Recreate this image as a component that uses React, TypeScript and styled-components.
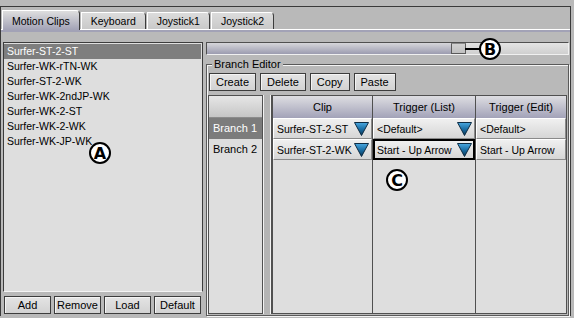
import styled, { createGlobalStyle } from "styled-components"

const GlobalStyle = createGlobalStyle`
  html, body { margin: 0; padding: 0; background: #b9b9b9; }
  body {
    font-family: "Liberation Sans", Arial, sans-serif;
    font-size: 10.5px;
    color: #000;
  }
  * { box-sizing: border-box; }
`

const Screen = styled.div`
  position: relative;
  width: 574px;
  height: 318px;
  overflow: hidden;
  background: #b9b9b9;
  padding-top: 6px;
`

const Window = styled.div`
  height: 310px;
  margin-right: 3px;
  border: 1px solid #3a3a3a;
  border-bottom: none;
  display: flex;
  flex-direction: column;
`

const TabBar = styled.div`
  height: 22px;
  display: flex;
  align-items: flex-end;
  padding-left: 1px;
`

const Tab = styled.div<{ $active?: boolean }>`
  height: ${(p) => (p.$active ? "20px" : "17px")};
  margin-bottom: ${(p) => (p.$active ? "-1px" : "0")};
  padding: 0 9px;
  margin-right: 1px;
  display: flex;
  align-items: center;
  justify-content: center;
  border-top: 1px solid #fff;
  border-left: 1px solid #fff;
  border-right: 1px solid #3c3c3c;
  border-top-right-radius: 4px;
  background: ${(p) =>
    p.$active
      ? "linear-gradient(#dedede, #a2a2b6)"
      : "linear-gradient(#dcdcdc, #c9c9c9)"};
  position: relative;
  z-index: ${(p) => (p.$active ? 1 : 0)};
`

const TabLine = styled.div`
  height: 3px;
  border-top: 1px solid #fff;
  background: #a2a2b6;
`

const Panel = styled.div`
  flex: 1;
  display: flex;
  gap: 3px;
  padding: 10px 1px 0 2px;
  min-height: 0;
`

const LeftCol = styled.div`
  width: 200px;
  display: flex;
  flex-direction: column;
  gap: 4px;
  padding-bottom: 2px;
`

const ListBox = styled.div`
  flex: 1;
  background: #dedede;
  border-top: 1px solid #3c3c3c;
  border-left: 1px solid #3c3c3c;
  border-right: 1px solid #3c3c3c;
  border-bottom: 1px solid #f4f4f4;
  padding-top: 1px;
`

const ListItem = styled.div<{ $selected?: boolean }>`
  height: 15px;
  line-height: 15px;
  padding-left: 3px;
  margin-right: 1px;
  background: ${(p) => (p.$selected ? "#7e7e7e" : "transparent")};
  color: ${(p) => (p.$selected ? "#fff" : "#000")};
  white-space: nowrap;
`

const ButtonRow = styled.div<{ $gap: number }>`
  display: flex;
  gap: ${(p) => p.$gap}px;
  padding-left: 1px;
`

const Button = styled.div<{ $w?: number }>`
  height: 18px;
  ${(p) => (p.$w ? `width: ${p.$w}px;` : "padding: 0 6px;")}
  display: flex;
  align-items: center;
  justify-content: center;
  border: 1px solid #3c3c3c;
  background: linear-gradient(#e4e4e4, #d2d2d2);
  box-shadow: inset 1px 1px 0 #f4f4f4;
  font-size: 11px;
`

const RightCol = styled.div`
  flex: 1;
  display: flex;
  flex-direction: column;
  gap: 9px;
  min-width: 0;
`

const SliderTrack = styled.div`
  height: 13px;
  display: flex;
  align-items: stretch;
  border-top: 1px solid #505050;
  border-left: 1px solid #505050;
  border-bottom: 1px solid #f0f0f0;
  border-right: 1px solid #f0f0f0;
`

const SliderFill = styled.div<{ $w: number }>`
  width: ${(p) => p.$w}px;
  background: linear-gradient(#d6d6da, #9c9cb0);
`

const SliderThumb = styled.div`
  width: 15px;
  background: linear-gradient(#d2d2d2, #c0c0c0);
  border: 1px solid #5a5a5a;
  border-top-color: #8a8a8a;
`

const SliderRest = styled.div`
  flex: 1;
  background: linear-gradient(#e4e4e4, #cfcfcf);
`

const GroupBox = styled.div`
  position: relative;
  flex: 1;
  border: 1px solid #5a5a5a;
  box-shadow: inset 1px 1px 0 #f4f4f4, 1px 1px 0 #f4f4f4;
  padding: 8px 1px 1px 1px;
  display: flex;
  flex-direction: column;
  gap: 4px;
`

const Legend = styled.div`
  position: absolute;
  top: -8px;
  left: 5px;
  padding: 0 2px;
  background: #b9b9b9;
  line-height: 14px;
  font-size: 11px;
`

const TableArea = styled.div`
  flex: 1;
  display: flex;
  min-height: 0;
`

const BranchCol = styled.div`
  width: 55px;
  border: 1px solid #505050;
  background: #dedede;
  display: flex;
  flex-direction: column;
`

const BranchHeader = styled.div`
  height: 22px;
  background: linear-gradient(#e6e6e6, #c6c6c6);
  border-bottom: 1px solid #8c8c8c;
`

const BranchRow = styled.div<{ $selected?: boolean }>`
  height: 21px;
  line-height: 21px;
  padding-left: 4px;
  font-size: 11px;
  background: ${(p) => (p.$selected ? "#7c7c7c" : "transparent")};
  color: ${(p) => (p.$selected ? "#fff" : "#000")};
`

const Splitter = styled.div`
  width: 9px;
  border-left: 1px solid #f2f2f2;
  border-right: 1px solid #505050;
  background: #b4b4b4;
  box-shadow: inset -1px 0 0 #f2f2f2;
`

const Grid = styled.div`
  flex: 1;
  display: flex;
  border: 1px solid #505050;
  background: #dedede;
`

const Column = styled.div<{ $w?: number }>`
  ${(p) => (p.$w ? `width: ${p.$w}px;` : "flex: 1;")}
  display: flex;
  flex-direction: column;
  border-right: 1px solid #505050;
  &:last-child { border-right: none; }
`

const HeaderCell = styled.div`
  height: 22px;
  display: flex;
  align-items: center;
  justify-content: center;
  background: linear-gradient(#dedee2, #a2a2b8);
  font-size: 11px;
`

const Cell = styled.div<{ $focused?: boolean }>`
  height: 21px;
  display: flex;
  align-items: center;
  justify-content: space-between;
  padding: 0 2px 0 3px;
  background: linear-gradient(#f0f0f0, #d6d6d6);
  white-space: nowrap;
  overflow: hidden;
  ${(p) =>
    p.$focused
      ? "border: 2px solid #000; padding-left: 2px; padding-right: 1px;"
      : "border-top: 1px solid #fff; border-left: 1px solid #fff; border-bottom: 1px solid #8a8a8a; border-right: 1px solid #8a8a8a;"}
  font-size: 10.5px;
`

const Callout = styled.div<{ $x: number; $y: number }>`
  position: absolute;
  left: ${(p) => p.$x - 11}px;
  top: ${(p) => p.$y - 11}px;
  width: 22px;
  height: 22px;
  border-radius: 50%;
  border: 2px solid #000;
  background: #fff;
  display: flex;
  align-items: center;
  justify-content: center;
  font-family: "DejaVu Sans", "Liberation Sans", sans-serif;
  font-weight: bold;
  font-size: 16px;
  line-height: 1;
  padding-top: 1px;
  z-index: 5;
`

const Leader = styled.div`
  position: absolute;
  left: 465px;
  top: 48px;
  width: 15px;
  height: 2px;
  background: #000;
  z-index: 4;
`

const DropArrow = () => (
  <svg width="15" height="14" viewBox="0 0 15 14">
    <defs>
      <linearGradient id="arrowFill" x1="0" y1="0" x2="0" y2="1">
        <stop offset="0" stopColor="#4aa8e0" />
        <stop offset="0.5" stopColor="#1b6fa6" />
        <stop offset="1" stopColor="#0b3654" />
      </linearGradient>
    </defs>
    <polygon points="0.5,0.5 14.5,0.5 7.5,13.5" fill="url(#arrowFill)" stroke="#0d2c44" strokeWidth="1" />
  </svg>
)

const clips = [
  "Surfer-ST-2-ST",
  "Surfer-WK-rTN-WK",
  "Surfer-ST-2-WK",
  "Surfer-WK-2ndJP-WK",
  "Surfer-WK-2-ST",
  "Surfer-WK-2-WK",
  "Surfer-WK-JP-WK",
]

export default function App() {
  return (
    <Screen>
      <GlobalStyle />
      <Window>
        <TabBar>
          <Tab $active>Motion Clips</Tab>
          <Tab>Keyboard</Tab>
          <Tab>Joystick1</Tab>
          <Tab>Joystick2</Tab>
        </TabBar>
        <TabLine />
        <Panel>
          <LeftCol>
            <ListBox>
              {clips.map((c, i) => (
                <ListItem key={c} $selected={i === 0}>
                  {c}
                </ListItem>
              ))}
            </ListBox>
            <ButtonRow $gap={3}>
              <Button $w={47}>Add</Button>
              <Button $w={47}>Remove</Button>
              <Button $w={47}>Load</Button>
              <Button $w={47}>Default</Button>
            </ButtonRow>
          </LeftCol>
          <RightCol>
            <SliderTrack>
              <SliderFill $w={244} />
              <SliderThumb />
              <SliderRest />
            </SliderTrack>
            <GroupBox>
              <Legend>Branch Editor</Legend>
              <ButtonRow $gap={4}>
                <Button>Create</Button>
                <Button>Delete</Button>
                <Button>Copy</Button>
                <Button>Paste</Button>
              </ButtonRow>
              <TableArea>
                <BranchCol>
                  <BranchHeader />
                  <BranchRow $selected>Branch 1</BranchRow>
                  <BranchRow>Branch 2</BranchRow>
                </BranchCol>
                <Splitter />
                <Grid>
                  <Column $w={100}>
                    <HeaderCell>Clip</HeaderCell>
                    <Cell>
                      Surfer-ST-2-ST <DropArrow />
                    </Cell>
                    <Cell>
                      Surfer-ST-2-WK <DropArrow />
                    </Cell>
                  </Column>
                  <Column $w={103}>
                    <HeaderCell>Trigger (List)</HeaderCell>
                    <Cell>
                      {"<Default>"} <DropArrow />
                    </Cell>
                    <Cell $focused>
                      Start - Up Arrow <DropArrow />
                    </Cell>
                  </Column>
                  <Column>
                    <HeaderCell>Trigger (Edit)</HeaderCell>
                    <Cell>{"<Default>"}</Cell>
                    <Cell>Start - Up Arrow</Cell>
                  </Column>
                </Grid>
              </TableArea>
            </GroupBox>
          </RightCol>
        </Panel>
      </Window>
      <Callout $x={100} $y={153}>A</Callout>
      <Leader />
      <Callout $x={490} $y={49}>B</Callout>
      <Callout $x={397} $y={180}>C</Callout>
    </Screen>
  )
}
